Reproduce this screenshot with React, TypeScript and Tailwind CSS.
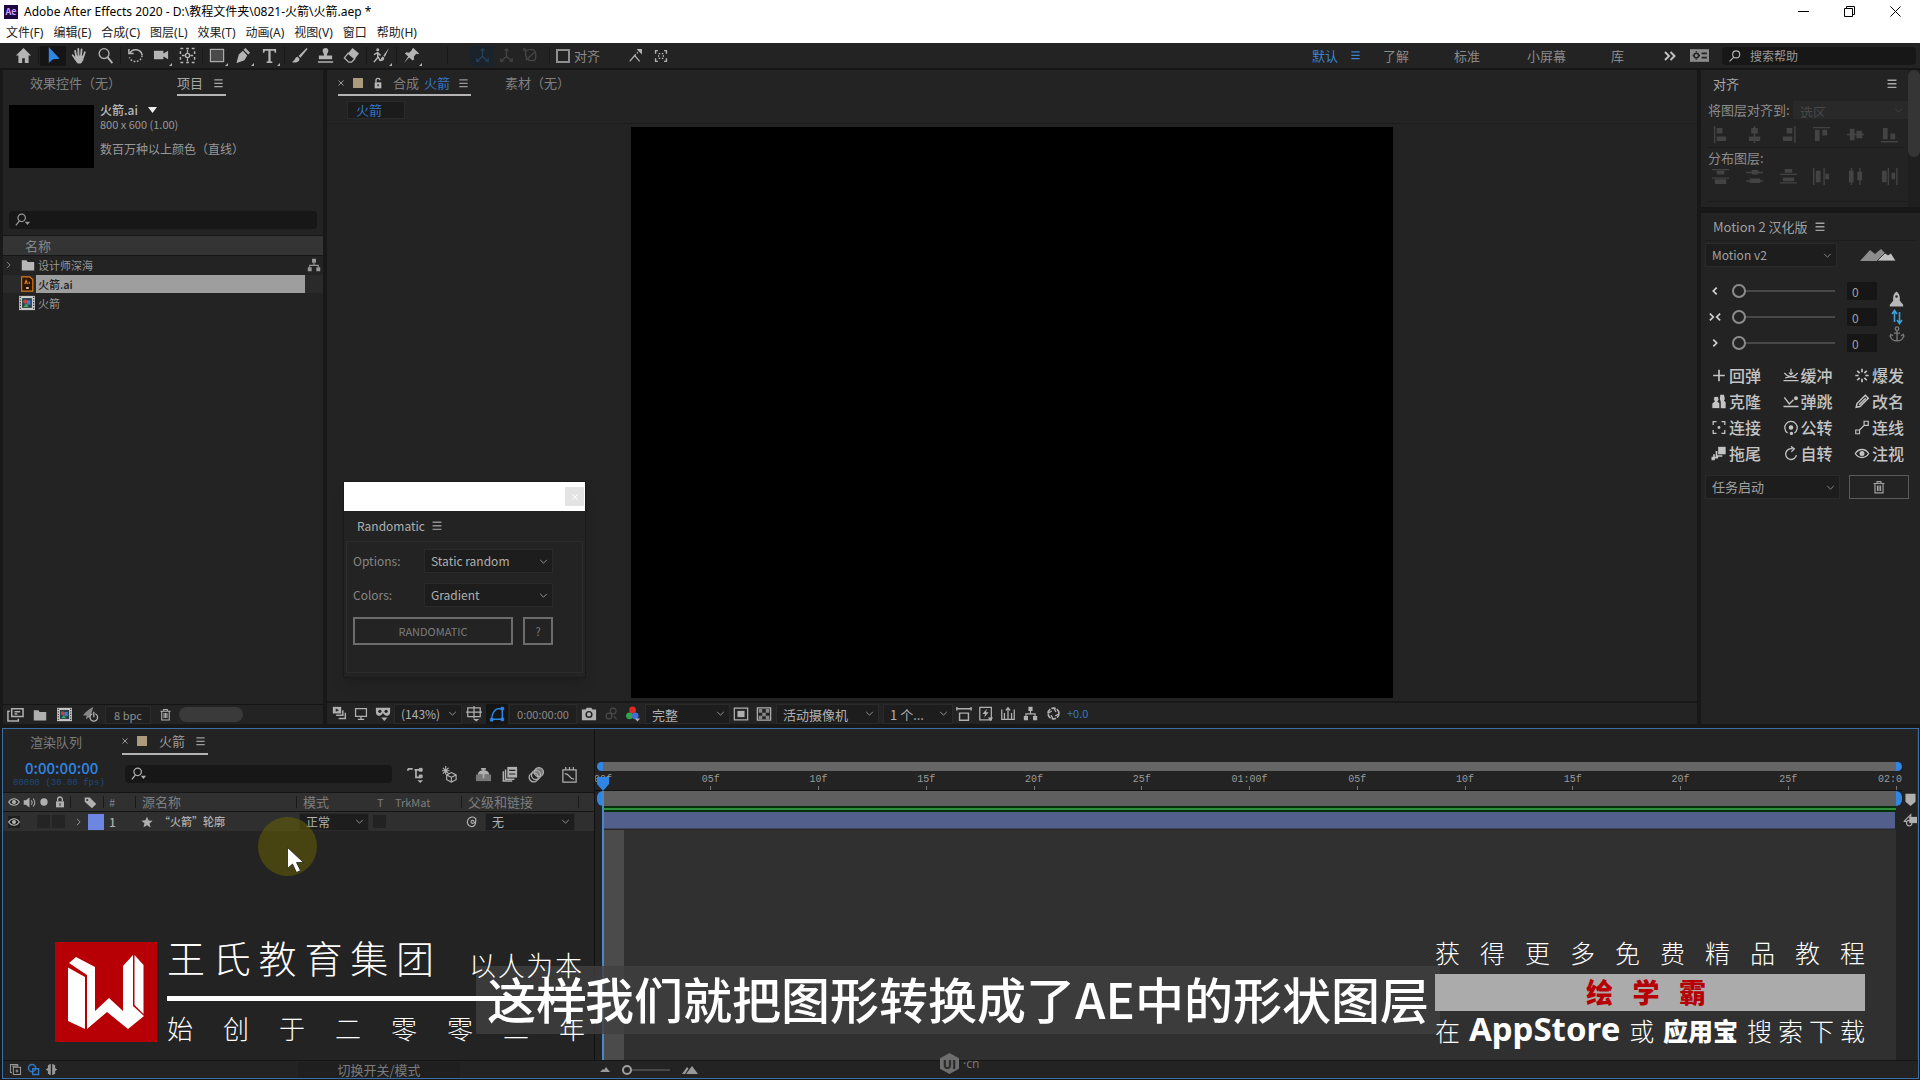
import React from "react";

type Kids = { children?: React.ReactNode };

/* ---------- icons, all on an 18 x 18 grid ---------- */
const line = { fill: "none", stroke: "currentColor", strokeWidth: 1.4 } as const;

const ICONS: Record<string, React.ReactNode> = {
  home: <path d="M9 1 1 9h2.6v8h4v-5h2.8v5h4V9H17z" />,
  select: <path d="M4 0v17l4.500-4 7-.5z" />,
  hand: (
    <g fill="none" stroke="currentColor" strokeLinecap="round">
      <path strokeWidth="1.9" d="M5.6 10 4.4 4.2M8 9 7.7 2M10.6 9l.6-6.4M13 10.500l1.6-5M4.600 12.500 1.800 8.800" />
      <path fill="currentColor" strokeWidth="1" d="M5 9.500h8.300l-.8 4.500-2 3H7l-2.800-4z" />
    </g>
  ),
  zoom: <g {...line}><circle cx="7.500" cy="7" r="5.200" /><path strokeWidth="2" d="m11.300 11 5 6" /></g>,
  rotate: <g {...line} strokeWidth="1.600"><path d="M3 6.500a7 7 0 0 1 13 2" /><path strokeDasharray="1.800 1.700" d="M16 9a7 7 0 0 1-13.500 2" /><path d="M2 2v5h5" /></g>,
  camera: <path d="M1 4h10v3l5-3v9l-5-3v3H1z" />,
  panbehind: <g {...line}><rect x="1.500" y="1.500" width="15" height="15" strokeDasharray="3 3" strokeWidth="1.600" /><circle cx="9" cy="9" r="2.200" /><path d="M9 3v3M9 12v3M3 9h3M12 9h3" /></g>,
  rect: <rect x="1.500" y="2.500" width="14" height="13" fill="#4a4a4a" stroke="currentColor" strokeWidth="1.200" />,
  pen: <g><path d="m11 1 5 5-2 2-5-5zM8.300 4l4.700 5-3 5-8 3 5-6.500a1.400 1.400 0 1 1 1 .8L4 15.500 1.500 17 4 8z" /></g>,
  type: <path d="M2 2h14v4h-1.500L14 4h-3.800v11l1.800.4V17H6v-1.600l1.800-.4V4H4l-.5 2H2z" />,
  brush: <path d="M16.500 1 8 9.500l2 2L17.500 2zM7 10.300c-3 .2-2.300 4-6 5.500 3.500 1.600 8 .6 8-3.300z" />,
  stamp: <path d="M6 4a3 3 0 0 1 6 0c0 2-1.500 3-1.500 5H16v4H2V9h5.500C7.500 7 6 6 6 4zM1 15h16v1.600H1z" />,
  eraser: <g><path d="m10 1 7 6-4.500 5.500-7-6z" /><path {...line} d="m5.500 6.500-4 5L6 16h3l3.500-3.500z" /></g>,
  roto: <g><path d="M17 1 11 9l1.500 1.500zM10.500 10c-2 .5-1.500 3-4 4.500 3 1 5.500 0 5.500-3z" /><circle cx="5" cy="3" r="1.600" /><path {...line} strokeWidth="1.600" d="M1 8l4-2 3 3M5 6v5l-4 5M5 10l3 5" /></g>,
  pin: <path d="m11 1 6 6-1.500.6-1.500-.5-2.500 3 .3 3-1.600 1.200L6.500 11 1 17l4.500-7L2 6.800l1.500-1.200 3 .4 3-2.700L9.500 2z" />,
  axis: <g {...line}><path d="M9 10V2M9 10l-6 5M9 10l6 5" /><path d="M7 4l2-2 2 2M3 12v3h3M15 12v3h-3" /></g>,
  axisview: <g {...line}><path d="M4 4c9-4 12 0 10 10M4 4l-2-2M4 4c-1 8 2 12 10 10" /><path d="M2 4V2h2M4 14 14 5" /></g>,
  snapline: <g {...line}><path d="M2 16 8 9l6 7" /><path strokeDasharray="2 1.500" d="m8 9 6-6" /><path fill="currentColor" d="M12 2h4v4z" /></g>,
  snapbox: <g {...line} strokeWidth="1.700"><path d="M2 6V2h3M13 2h3v4M16 12v4h-3M5 16H2v-4" /><path strokeDasharray="2 2" d="M6 6h6v6H6z" /></g>,
  workspace: <g><path d="M0 3h18v12H0z" /><g fill="none" stroke="#232323" strokeWidth="1.500"><circle cx="6" cy="9" r="2.200" /><path d="M6 5v1M6 12v1M2.500 9h1M8.500 9h1M11 7h5M11 11h5" /></g></g>,
  search: <g {...line} strokeWidth="1.500"><circle cx="10.500" cy="7" r="4.500" /><path d="M7.500 10.500 2 16" /></g>,
  searchdown: <g><circle cx="7.500" cy="6.500" r="4.200" {...line} /><path {...line} d="M5 10 1 15" /><path d="M11 11h6l-3 3.500z" /></g>,
  burger: <path d="M4 4h10v1.500H4zM4 8h10v1.500H4zM4 12h10v1.500H4z" />,
  lock: <g><path d="M4 8h10v9H4z" /><path {...line} strokeWidth="2" d="M6 8V5a3 3 0 0 1 6 0" /><path fill="#232323" d="M8 11h2v3H8z" /></g>,
  lockshut: <g><path d="M3 8h12v9H3z" /><path {...line} strokeWidth="2" d="M5.500 8V5a3.500 3.500 0 0 1 7 0v3" /><path fill="#232323" d="M8.200 11h1.600v3.500H8.200z" /></g>,
  folder: <path d="M1 3h6l1.500 2H17v11H1z" />,
  ai: <g><path d="M3 1h9l3.500 3v13H3z" fill="#2c1500" stroke="#d9791e" strokeWidth="1.300" /><path d="m6.500 9 1.500-4 1.500 4M11.500 6.500V9" stroke="#f08a24" fill="none" strokeWidth="1.200" /><path d="M8 12.500h3v2H8z" fill="#e8c9a8" /></g>,
  comp: <g><path fill="#c9c9c9" d="M0 1h18v16H0z" /><path stroke="#333" strokeWidth="1.400" strokeDasharray="1.500 1.500" d="M1.500 2v15M16.500 2v15" /><path fill="#26404a" d="M3.500 3.500h11v11h-11z" /><circle cx="7" cy="7.500" r="2.400" fill="#c4453c" /><path fill="#4478c4" d="M9 6h4v5H9z" /><path fill="#45a35b" d="m5 13.500 3-4 3 4z" /></g>,
  tree: <g><path d="M6.500 1h5v5h-5zM1 12h5v5H1zM12 12h5v5h-5z" /><path {...line} d="M9 6v4M3.500 12v-2.500h11V12" /></g>,
  interpret: <g {...line} strokeWidth="1.600"><path d="M5 3h12v8H5zM8 6h6M8 8.500h3" /><path d="M3 5.500H1V16h11v-2.500" /></g>,
  rocketpow: <g><path d="M12 1C7 3 3 7 1 10h4l-1 4 5-3z" opacity=".7" /><circle cx="12.500" cy="12" r="4" {...line} /><path stroke="#232323" strokeWidth="3" d="M12.500 6v5" /><path {...line} d="M12.500 6v6" /></g>,
  trash: <g {...line} strokeWidth="1.500"><path d="M2 4.500h14M6.500 4V2h5v2M3.800 5v11.500h10.400V5M7 7v7M9 7v7M11 7v7" /></g>,
  stack: <g><path d="M1 1h10v8H1z" /><path fill="#232323" d="m4.500 3 4 2-4 2z" /><path {...line} d="M13 5v6H5M16 8v7H8" strokeWidth="1.700" /></g>,
  monitor: <g {...line} strokeWidth="1.600"><path d="M2 2h14v10H2zM5 16h8M9 12v4" /></g>,
  mask: <g><path d="M1 2h16v5c0 3-2 4-4 4s-3-1.500-4-3c-1 1.500-2 3-4 3s-4-1-4-4z" /><g fill="#232323"><circle cx="5.500" cy="6" r="1.800" /><circle cx="12.500" cy="6" r="1.800" /></g><path d="M7 13h7l-3.500 4z" /></g>,
  grid: <g><path {...line} d="M2 2h14v10H2zM9 0v14M0 7h18" /><path d="M8 14.500h7l-3.500 3z" /></g>,
  shapemask: <g {...line} strokeWidth="1.600"><path d="M3 15C3 9 6 4 10 3h5v12z" /><path fill="currentColor" strokeWidth="1" d="M1.500 14h3v3h-3zM13.500 13.500h3v3h-3zM13.500 1.500h3v3h-3z" /></g>,
  photo: <g><path d="M1 4h4l1.500-2h5L13 4h4v12H1z" /><circle cx="9" cy="9.500" r="3.200" fill="none" stroke="#232323" strokeWidth="1.600" /></g>,
  link: <g {...line}><circle cx="6" cy="12" r="3.500" /><circle cx="11" cy="6" r="3.500" /><path d="m12 12 3 4" /></g>,
  rgb: <g><circle cx="8.500" cy="4.500" r="3.800" fill="#d92b22" /><circle cx="5" cy="11" r="3.800" fill="#2fa44a" /><circle cx="11.500" cy="11" r="3.800" fill="#3f6fd6" /><path d="M11 14h6l-3 3.500z" /></g>,
  target: <g><path {...line} d="M1.500 2.500h15v13h-15z" /><path d="M5 5.500h8v7H5z" /></g>,
  checker: <g><path {...line} d="M1.500 2h15v14h-15z" /><path opacity=".7" d="M3 3.500h4v4H3zM11 3.500h4v4h-4zM7 7.500h4v4H7zM3 11h4v4H3zM11 11h4v4h-4z" /></g>,
  ratio: <g {...line} strokeWidth="1.600"><path d="M4 8h10v8H4zM1 3h16M1 1v4M17 1v4" /></g>,
  fast: <g><path {...line} d="M2 1.500h13v14H2z" /><path d="m10 3-5 6h3l-1 4 5-6H9z" /><path d="M11 13h6l-3 4z" /></g>,
  tline: <g {...line}><path d="M2 4v11h14V4M5 8v7M13 8v7M9 3v12M6.500 5 9 2l2.500 3" /></g>,
  aperture: <g {...line} strokeWidth="2"><circle cx="9" cy="9" r="6.500" strokeDasharray="5.500 1.300" /><path strokeWidth="1.500" d="m9 2 3 5M16 9l-5 3M9 16l-3-5M2 9l5-3" /></g>,
  flow: <g {...line} strokeWidth="1.800"><path d="M1 3h5M1 3v2M8 4h8M9.500 4v8H14" /><path fill="currentColor" strokeWidth="1" d="M13 2.500h3v3h-3zM13 9.500h3v3h-3z" /><path fill="currentColor" stroke="none" d="M11 15h6l-3 3z" /></g>,
  draft3d: <g {...line}><path d="m11 7 5 2.500v5L11 17l-5-2.500v-5zM6 9.500l5 2.500 5-2.500M11 12v5M5 0v9M1 5h8M2 2l6 6M8 2 2 8" strokeWidth="1.200" /></g>,
  shy: <g><path d="M1 9h16v7H1z" opacity=".6" /><path {...line} strokeWidth="1.800" d="M9 2v11M6.500 3h5" /><path d="M3 9c0-6 12-6 12 0z" /></g>,
  blend: <g><path d="M6 1h11v12H6z" /><path {...line} d="M4 4v11h10M1.500 6v11h10" strokeWidth="1.700" /><path stroke="#232323" strokeWidth="1.300" d="M8 5h7M8 9h7" /></g>,
  blur: <g {...line}><circle cx="11.500" cy="6.500" r="4.800" fill="currentColor" fillOpacity=".6" /><circle cx="8.500" cy="9.500" r="4.800" /><circle cx="6" cy="12" r="4.800" /></g>,
  graph: <g {...line} strokeWidth="1.300"><path d="M2 4h14v13H2zM5 1v3M9 1v3M13 1v3M4 8c6 0 4 6 10 6" /></g>,
  eye: <g><path {...line} strokeWidth="1.700" d="M1 9c4-6.500 12-6.500 16 0-4 6.500-12 6.500-16 0z" /><circle cx="9" cy="9" r="3" /></g>,
  speaker: <g><path d="M1 6h3l5-4v14l-5-4H1z" /><path {...line} d="M11.500 6c1.500 2 1.500 4 0 6M14 3.500c3 3.500 3 7.500 0 11" /></g>,
  dot: <circle cx="9" cy="9" r="5.500" />,
  tag: <path fillRule="evenodd" d="M1 2h7l9 9-6 6-10-9zm3.500 2a1.400 1.400 0 1 0 0 2.800 1.400 1.400 0 0 0 0-2.800z" />,
  star: <path d="m9 1 2.400 5.600 6 .5-4.600 4 1.500 6L9 13.900 3.700 17l1.500-6-4.600-4 6-.5z" />,
  spiral: <path {...line} strokeWidth="1.600" d="M11 9.500a2 2 0 1 0-2 2c3 0 4.500-2 4.500-4.500M13.500 4v5c0 5-3 7.500-6.500 7C2 15 1 10 2.500 6.500 5 2 10 2 13 4.500" />,
  marker: <path d="M2 1h14v11l-7 6-7-6z" />,
  compbutton: <g><path d="M8 5h10v8H8z" /><path {...line} d="M1 11 10 2v7M1 11h4" /><circle cx="8" cy="13" r="3.500" {...line} /></g>,
  pane1: <g {...line}><path d="M6 6h10v10H6zM9 11h4M11 9v4M4 13H2V2h10v2M4 4h9" /></g>,
  pane2: <g {...line} strokeWidth="2"><circle cx="7" cy="7" r="5" /><path d="M8 8h8v8H8z" /></g>,
  pane3: <path d="M8 1v16l-4-2V11L1 9l3-2V3zM10 1v16l4-2V11l3-2-3-2V3z" />,
  plus: <path {...line} strokeWidth="2" d="M9 2v14M2 9h14" />,
  cushion: <g {...line} strokeWidth="1.500"><path d="M0 15h18M2 12c5-2 9-2 14 0M3 8c4 3 8 3 12 0M1 6c2 2 3 3 4 3M17 6c-2 2-3 3-4 3M9 1v7M6.500 5.500 9 8l2.500-2.500" /></g>,
  burst: <path {...line} strokeWidth="2" d="M9 1v4M9 13v4M1 9h4M13 9h4M3.300 3.300l2.900 2.900M11.800 11.800l2.900 2.900M3.300 14.700l2.900-2.900M11.800 6.200l2.900-2.900" />,
  people: <g><path d="M10.500 1h4.500l1 5-1 2 2 2v7h-6V9l-1-3z" /><path stroke="#232323" d="M3 3h5l1 4-1.500 2 2.500 2v6.500H.5V11L3.500 9 2.500 7z" /></g>,
  bounce: <g {...line} strokeWidth="1.700"><path d="M0 15h18M1 4l6 8 5-5" /><circle cx="15" cy="5" r="1.500" fill="currentColor" /></g>,
  pencil: <g {...line} strokeWidth="1.800"><path d="m2 16 1-4.500L13 1.500 16.500 5 6.500 15zM5.500 13l8-8" /></g>,
  connect: <g {...line} strokeWidth="1.500"><path d="M2 6V2h4M12 2h4v4M16 12v4h-4M6 16H2v-4" /><circle cx="9" cy="9" r="1" fill="currentColor" /></g>,
  orbit: <g {...line} strokeWidth="1.500"><path d="M5 15.500A7.500 7.500 0 1 1 13 15.500" /><circle cx="9" cy="9" r="2" fill="currentColor" /><circle cx="9.500" cy="16" r="1.300" fill="currentColor" /></g>,
  wire: <g {...line}><path d="M1.500 12h4.500v4.500H1.500zM11.500 1.500H16.500V6.500H11.500zM6 12l5.500-5.500" /></g>,
  trail: <g><path d="M8 1h9v9H8z" /><path {...line} strokeWidth="2" d="M6 6v6h7M3 10v4h5M1 13v3h3" /></g>,
  spin: <g {...line} strokeWidth="1.600"><path d="M11 3.500A6.500 6.500 0 1 0 15.500 11" /><path d="M9 .5l4 3-3.500 3.500" /></g>,
  rocket: <path d="M9 0c3 2 4 5 4 8v3l4 5v2H1v-2l4-5V8c0-3 1-6 4-8zm0 4.500A1.500 1.500 0 1 0 9 7.500 1.500 1.500 0 0 0 9 4.500z" fillRule="evenodd" />,
  updown: <path {...line} strokeWidth="1.600" d="M6.500 14V3M4 6l2.500-3.500L9 6M11.500 4v11M9 12l2.500 3.500 2.500-3.500" />,
  anchor: <g {...line} strokeWidth="1.500"><circle cx="9" cy="3" r="2" /><path d="M9 5v12M5.500 8h7M1.500 10c0 9 15 9 15 0M1 12l1-2.500L4.500 11M17 12l-1-2.500L13.500 11" /></g>,
};

const Icon = ({ n, className = "size-[18px]" }: { n: string; className?: string }) => (
  <svg viewBox="0 0 18 18" fill="currentColor" aria-hidden="true" className={`shrink-0 ${className}`}>
    {ICONS[n]}
  </svg>
);

const Cross = () => (
  <svg viewBox="0 0 6 6" className="size-1.5" fill="none" stroke="currentColor" aria-hidden="true"><path d="m.5.500 5 5m0-5-5 5" /></svg>
);

const Tool = ({ n, label, w = "w-[26px]", size = "size-[17px]", corner = false, className = "" }: { n: string; label: string; w?: string; size?: string; corner?: boolean; className?: string }) => (
  <button type="button" aria-label={label} className={`relative flex h-5 shrink-0 items-center justify-center ${w} ${className}`}>
    <Icon n={n} className={size} />
    {corner && (
      <svg viewBox="0 0 4 4" className="absolute right-0.5 bottom-0 size-[3px]" fill="currentColor"><path d="M4 0v4H0z" /></svg>
    )}
  </button>
);

const Sep = ({ className = "w-1" }: { className?: string }) => (
  <span className={`flex h-full shrink-0 justify-center py-1 ${className}`}><span className="w-px bg-[#181818]" /></span>
);

const Chevron = () => (
  <svg viewBox="0 0 10 6" className="pointer-events-none absolute right-1 h-[5px] w-[9px]" fill="none" stroke="currentColor" strokeWidth="1.200" opacity=".8"><path d="m1 1 4 4 4-4" /></svg>
);

const Select = ({ label, value, className = "" }: { label: string; value: string; className?: string }) => (
  <span className={`relative flex shrink-0 items-center border border-[#2a2a2a] bg-[#1d1d1d] ${className}`}>
    <select aria-label={label} defaultValue={value} className="h-full w-full appearance-none overflow-hidden bg-transparent pr-4 pl-1.5 outline-none">
      <option>{value}</option>
    </select>
    <Chevron />
  </span>
);

/* a run of Han characters spread evenly over the line */
const Spread = ({ children, className = "" }: Kids & { className?: string }) => (
  <p className={`whitespace-nowrap [text-align-last:justify] ${className}`}>{children}</p>
);

/* ---------- top of the window ---------- */
const MENUS = ["文件(F)", "编辑(E)", "合成(C)", "图层(L)", "效果(T)", "动画(A)", "视图(V)", "窗口", "帮助(H)"];

const TitleBar = () => (
  <header className="bg-white text-black">
    <div className="flex h-[23px] items-center pl-1">
      <span className="mr-1.5 flex size-[14px] items-center justify-center bg-[#1f0740] text-[9px] font-semibold text-[#c9a0ff]">Ae</span>
      <h1 className="font-['Noto_Sans','Noto_Sans_CJK_SC',sans-serif] text-xs leading-5">Adobe After Effects 2020 - D:\教程文件夹\0821-火箭\火箭.aep *</h1>
      <div className="ml-auto flex pr-0.5">
        <button type="button" aria-label="最小化" className="flex w-[46px] justify-center"><svg viewBox="0 0 11 11" className="size-[11px]" stroke="#000"><path d="M0 5.500h11" /></svg></button>
        <button type="button" aria-label="还原" className="flex w-[46px] justify-center"><svg viewBox="0 0 11 11" className="size-[11px]" stroke="#000" fill="none"><path d="M.5 2.500h8v8h-8zM2.500 2V.5h8v8H9" /></svg></button>
        <button type="button" aria-label="关闭" className="flex w-[46px] justify-center"><svg viewBox="0 0 11 11" className="size-[11px]" stroke="#000"><path d="m.5.500 10 10m0-10-10 10" /></svg></button>
      </div>
    </div>
    <nav className="flex h-5 items-center gap-2.5 pl-1.5 font-['Noto_Sans','Noto_Sans_CJK_SC',sans-serif] text-xs text-[#222]">
      {MENUS.map((m) => <button type="button" key={m}>{m}</button>)}
    </nav>
  </header>
);

const Toolbar = () => (
  <div className="flex h-[27px] items-center border-b-2 border-[#161616] pl-2.5 text-[#b4b4b4]">
    <Tool n="home" label="主页" />
    <Sep />
    <Tool n="select" label="选取工具" className="bg-[#151515] text-[#2f86e5]" />
    <Tool n="hand" label="手形工具" />
    <Tool n="zoom" label="缩放工具" />
    <Sep />
    <Tool n="rotate" label="旋转工具" />
    <Tool n="camera" label="摄像机工具" corner />
    <Tool n="panbehind" label="锚点工具" />
    <Sep />
    <Tool n="rect" label="矩形工具" corner />
    <Tool n="pen" label="钢笔工具" corner />
    <Tool n="type" label="文字工具" corner />
    <Sep />
    <Tool n="brush" label="画笔工具" />
    <Tool n="stamp" label="仿制图章" />
    <Tool n="eraser" label="橡皮擦" />
    <Sep />
    <Tool n="roto" label="Roto 笔刷" corner />
    <Sep />
    <Tool n="pin" label="人偶位置控点" corner />
    <Sep className="w-[46px]" />
    <Tool n="axis" label="本地轴" w="w-6" className="bg-[#1c2229] text-[#23405e]" />
    <Tool n="axis" label="世界轴" w="w-6" className="text-[#444]" />
    <Tool n="axisview" label="视图轴" w="w-6" className="text-[#444]" />
    <Sep className="w-[14px]" />
    <label className="flex items-center gap-1 text-[13px] text-[#8a8a8a]">
      <input type="checkbox" className="size-[14px] appearance-none border-2 border-[#8f8f8f]" />对齐
    </label>
    <Tool n="snapline" label="对齐边缘" size="size-[15px]" className="ml-[22px]" />
    <Tool n="snapbox" label="对齐框" size="size-[14px]" />
    <nav className="ml-auto flex items-center text-[13px] text-[#8a8a8a]">
      <button type="button" className="flex items-center gap-2.5 text-[#3b82d0]">默认<Icon n="burger" className="size-[15px]" /></button>
      <button type="button" className="ml-5">了解</button>
      <button type="button" className="ml-[45px]">标准</button>
      <button type="button" className="ml-[47px]">小屏幕</button>
      <button type="button" className="ml-[45px]">库</button>
      <button type="button" aria-label="更多" className="ml-10 text-[#c0c0c0]"><svg viewBox="0 0 12 10" className="h-[10px] w-3" fill="none" stroke="currentColor" strokeWidth="2"><path d="m1 1 4 4-4 4M6.500 1l4 4-4 4" /></svg></button>
      <Tool n="workspace" label="工作区" size="size-[19px]" className="ml-2.5" />
    </nav>
    <label className="mr-1 ml-2.5 flex h-[18px] w-[194px] items-center gap-2 rounded-sm bg-[#171717] pl-1.5">
      <Icon n="search" className="size-[14px]" />
      <input aria-label="搜索帮助" placeholder="搜索帮助" className="w-full bg-transparent text-xs outline-none placeholder:text-[#9a9a9a]" />
    </label>
  </div>
);

/* ---------- project panel ---------- */
const ProjectPanel = () => (
  <section className="flex w-[320px] shrink-0 flex-col bg-[#232323] text-[#989898]">
    <div className="flex h-[27px] items-start pl-[27px] text-[13px] leading-[26px]">
      <button type="button" className="text-[#808080]">效果控件（无）</button>
      <button type="button" className="ml-[56px] flex h-[26px] items-center gap-2 border-b-2 border-[#b4b4b4] pt-0.5 text-[#a8a8a8]">项目<Icon n="burger" className="size-[15px]" /></button>
    </div>
    <div className="flex h-[114px] gap-1.5 pt-2 pl-1.5">
      <div className="h-[63px] w-[85px] bg-black" />
      <div className="-mt-1 text-xs">
        <p className="flex items-center gap-2.5 leading-[18px] font-medium text-[#b8b8b8]">火箭.ai<svg viewBox="0 0 9 6" className="h-1.5 w-[9px]" fill="#eee"><path d="M0 0h9L4.500 6z" /></svg></p>
        <p className="text-[11px] leading-[10px]">800 x 600 (1.00)</p>
        <p className="mt-2.5 leading-5">数百万种以上颜色（直线）</p>
      </div>
    </div>
    <label className="mx-1.5 flex h-[18px] items-center rounded-sm bg-[#171717] pl-1.5">
      <Icon n="searchdown" className="size-4" />
      <input aria-label="搜索项目" className="w-full bg-transparent text-xs outline-none" />
    </label>
    <table className="mt-1.5 w-full text-[11px]">
      <thead>
        <tr className="h-5 border-y border-[#161616] bg-[#343434]">
          <th className="py-0 pl-[22px] text-left text-[13px] leading-4 font-normal text-[#858585]">名称</th>
        </tr>
      </thead>
      <tbody>
        <tr className="h-[19px]"><td className="p-0"><div className="flex items-center pr-0.5"><svg viewBox="0 0 6 10" className="mr-2.5 ml-[3px] h-2 w-[5px]" fill="none" stroke="currentColor"><path d="m1 1 4 4-4 4" /></svg><Icon n="folder" className="size-[14px] text-[#b8b8b8]" /><span className="ml-[3px] leading-4">设计师深海</span><Icon n="tree" className="ml-auto size-[14px]" /></div></td></tr>
        <tr className="h-[19px]"><td className="p-0"><div className="flex items-center bg-[#2a2a2a] pl-4"><Icon n="ai" className="size-4" /><span className="ml-px h-[18px] w-[269px] bg-[#9e9e9e] pl-0.5 leading-[18px] font-medium text-[#1c1c1c]">火箭.ai</span></div></td></tr>
        <tr className="h-[19px]"><td className="p-0"><div className="flex items-center pl-4"><Icon n="comp" className="size-4" /><span className="ml-[3px] leading-4">火箭</span></div></td></tr>
      </tbody>
    </table>
    <div className="mt-auto flex h-5 items-center border-t border-[#141414] text-[#b0b0b0]">
      <Tool n="interpret" label="解释素材" w="w-6" size="size-[17px]" />
      <Tool n="folder" label="新建文件夹" w="w-[26px]" size="size-[14px]" />
      <Tool n="comp" label="新建合成" w="w-[22px]" size="size-[15px]" />
      <Tool n="rocketpow" label="项目设置" w="w-[30px]" size="size-[17px]" />
      <button type="button" className="h-[18px] w-[46px] border border-[#2b2b2b] bg-[#1f1f1f] text-[11px] leading-4 text-[#8f8f8f]">8 bpc</button>
      <Tool n="trash" label="删除" w="w-[28px]" size="size-[13px]" />
      <div className="h-[15px] w-16 rounded-full bg-[#3a3a3a]" />
    </div>
  </section>
);

/* ---------- composition viewer ---------- */
const Randomatic = () => (
  <aside className="absolute bottom-[46px] left-4 w-[243px] border border-[#1a1a1a] bg-[#232323] pb-1 text-xs text-[#b0b0b0] shadow-lg">
    <div className="flex h-[29px] items-center justify-end bg-white pr-px">
      <button type="button" aria-label="关闭面板" className="flex size-[19px] items-center justify-center bg-[#e3e3e3] text-white"><Cross /></button>
    </div>
    <h2 className="flex h-[30px] items-center gap-1 pl-[13px]">Randomatic<Icon n="burger" className="size-4 text-[#909090]" /></h2>
    <div className="mx-0.5 flex h-[132px] flex-col gap-2.5 border border-[#2c2c2c] pt-[7px] pl-1.5">
      <div className="flex items-center"><span className="w-[71px] text-[#858585]">Options:</span><Select label="Options" value="Static random" className="h-6 w-[129px]" /></div>
      <div className="flex items-center"><span className="w-[71px] text-[#858585]">Colors:</span><Select label="Colors" value="Gradient" className="h-6 w-[129px]" /></div>
      <div className="flex gap-2.5 text-[11px] text-[#7c7c7c]">
        <button type="button" className="h-7 w-[160px] border-2 border-[#6c6c6c] leading-6">RANDOMATIC</button>
        <button type="button" className="h-7 w-[30px] border-2 border-[#6c6c6c] leading-6">?</button>
      </div>
    </div>
  </aside>
);

const Viewer = () => (
  <section className="relative flex min-w-0 flex-1 flex-col bg-[#232323] text-[#989898]">
    <div className="flex h-[27px] items-start pl-[11px] text-[13px] leading-[26px]">
      <div className="flex h-[26px] items-center border-b-2 border-[#b4b4b4] pt-0.5">
        <button type="button" aria-label="关闭合成" className="flex w-[15px]"><Cross /></button>
        <span className="size-[10px] bg-[#ab9a7b]" />
        <Icon n="lock" className="mx-[9px] size-3 text-[#b8b8b8]" />
        <span className="text-[#808080]">合成</span>
        <span className="ml-[5px] text-[#3577bf]">火箭</span>
        <Icon n="burger" className="ml-1.5 size-[15px]" />
      </div>
      <button type="button" className="ml-[34px] text-[#808080]">素材（无）</button>
    </div>
    <div className="flex h-[27px] items-start border-b border-[#1c1c1c] pt-1 pl-5">
      <button type="button" className="h-[18px] w-[58px] border border-[#2a2a2a] bg-[#1b1b1b] pl-2 text-left text-[13px] leading-4 text-[#3577bf]">火箭</button>
    </div>
    <div className="mx-auto mt-[3px] w-full max-w-[762px] flex-1 bg-black" />
    <Randomatic />
    <div className="mt-[3px] flex h-[23px] items-center border-t-2 border-[#181818] text-[13px] text-[#b0b0b0]">
      <Tool n="stack" label="始终预览" w="w-6" size="size-[15px]" />
      <Tool n="monitor" label="主查看器" w="w-5" size="size-[14px]" />
      <Tool n="mask" label="VR 眼镜" w="w-[23px]" size="size-4" />
      <Select label="放大率" value="(143%)" className="h-5 w-[68px] text-xs" />
      <Tool n="grid" label="网格" w="w-6" size="size-4" />
      <Tool n="shapemask" label="形状路径可见性" w="w-[22px]" size="size-4" className="bg-[#151515] text-[#2f86e5]" />
      <button type="button" className="ml-px h-5 w-[68px] border border-[#2a2a2a] bg-[#1f1f1f] text-[11px] leading-4 text-[#8a8a8a]">0:00:00:00</button>
      <Tool n="photo" label="快照" w="w-6" size="size-4" />
      <Tool n="link" label="显示快照" w="w-5" size="size-[15px]" className="text-[#4a4a4a]" />
      <Tool n="rgb" label="通道" w="w-6" size="size-4" />
      <Select label="分辨率" value="完整" className="h-5 w-[85px]" />
      <Tool n="target" label="目标区域" w="w-[22px]" size="size-4" />
      <Tool n="checker" label="透明网格" w="w-6" size="size-4" />
      <Select label="3D 视图" value="活动摄像机" className="h-5 w-[103px]" />
      <Select label="视图布局" value="1 个..." className="ml-1 h-5 w-[70px]" />
      <Tool n="ratio" label="像素长宽比" w="w-[22px]" size="size-4" />
      <Tool n="fast" label="快速预览" w="w-[22px]" size="size-4" />
      <Tool n="tline" label="时间轴" w="w-[22px]" size="size-4" />
      <Tool n="tree" label="流程图" w="w-[22px]" size="size-[15px]" />
      <Tool n="aperture" label="重置曝光度" w="w-6" size="size-[15px]" />
      <span className="ml-0.5 text-[11px] text-[#3577bf]">+0.0</span>
    </div>
  </section>
);

/* ---------- right column ---------- */
const ALIGN = [
  "M2 0h1.500v18H2zM5 2h6v6H5zM5 11h10v5H5z",
  "M8.300 0h1.500v18H8.300zM5.500 2h7v6h-7zM3 11h12v5H3z",
  "M15 0h1.500v18H15zM7 2h6v6H7zM3 11h10v5H3z",
  "M0 1h18v1.500H0zM2 4h5v12H2zM10 4h5v6h-5z",
  "M0 8.300h18v1.500H0zM3 3h5v12H3zM10 5h6v8h-6z",
  "M0 16h18v1.500H0zM2 2h5v12H2zM10 8h5v6h-5z",
];
const DISTRIBUTE = [
  "M0 1h18v1.500H0zM5 3h8v4H5zM0 10h18v1.500H0zM3 12h12v5H3z",
  "M0 4h18v1.500H0zM6 2h7v5H6zM0 13h18v1.500H0zM4 11h11v5H4z",
  "M5 1h8v4H5zM0 6h18v1.500H0zM3 10h12v4H3zM0 15h18v1.500H0z",
  "M0 0h1.500v18H0zM3 3h5v12H3zM11 0h1.500v18H11zM13 6h4v6h-4z",
  "M4 0h1.500v18H4zM2 3h5v12H2zM13 0h1.500v18H13zM11 4h5v9h-5z",
  "M7 0h1.500v18H7zM1 3h5v12H1zM16 0h1.500v18H16zM11 5h4v7h-4z",
];
const AlignRow = ({ shapes, label }: { shapes: string[]; label: string }) => (
  <div className="flex justify-between pr-2.5 pl-1">
    {shapes.map((d, i) => (
      <button type="button" key={d} aria-label={`${label} ${i + 1}`}><svg viewBox="0 0 18 18" className="size-[17px]" fill="#434343"><path d={d} /></svg></button>
    ))}
  </div>
);

const ACTIONS: [string, string][] = [
  ["plus", "回弹"], ["cushion", "缓冲"], ["burst", "爆发"],
  ["people", "克隆"], ["bounce", "弹跳"], ["pencil", "改名"],
  ["connect", "连接"], ["orbit", "公转"], ["wire", "连线"],
  ["trail", "拖尾"], ["spin", "自转"], ["eye", "注视"],
];
const EASES: [string, string][] = [
  ["缓入", "M9 2 5 6l4 4"],
  ["缓入缓出", "m1 2 4 4-4 4M13 2 9 6l4 4"],
  ["缓出", "m5 2 4 4-4 4"],
];

const RightColumn = () => (
  <div className="flex w-[219px] shrink-0 flex-col gap-1.5">
    <section className="flex h-[137px] bg-[#232323] text-[13px] text-[#8c8c8c]">
      <div className="min-w-0 flex-1 pl-[7px]">
        <h2 className="flex h-[28px] items-center justify-between pr-2 pl-[5px] text-[#a8a8a8]">对齐<Icon n="burger" className="size-4" /></h2>
        <div className="flex h-6 items-center"><span className="whitespace-nowrap">将图层对齐到:</span><Select label="将图层对齐到" value="选区" className="ml-auto h-[18px] w-[115px] border-transparent bg-[#292929] text-[#484848]" /></div>
        <div className="pt-1"><AlignRow shapes={ALIGN} label="对齐方式" /></div>
        <p className="mt-1 mr-1 border-t border-[#1b1b1b] leading-5">分布图层:</p>
        <AlignRow shapes={DISTRIBUTE} label="分布方式" />
        <div className="mt-4 border-t border-[#1b1b1b]" />
      </div>
      <div className="w-3 bg-[#1f1f1f]"><div className="h-[87px] rounded-full bg-[#353535]" /></div>
    </section>
    <section className="flex-1 bg-[#232323] px-1 text-[#a0a0a0]">
      <h2 className="flex h-[28px] items-center gap-1 border-b border-[#1d1d1d] pl-2 text-[13px]">Motion 2 汉化版<Icon n="burger" className="size-4" /></h2>
      <div className="mt-0.5 flex items-center justify-between pr-5">
        <Select label="脚本" value="Motion v2" className="h-6 w-[132px] text-xs" />
        <svg viewBox="0 0 36 13" className="h-[13px] w-9" aria-hidden="true"><path d="M0 12 10 1l5 4 6-5 5 5-7 7z" fill="#8c8c8c" /><path d="m17 12 8-8 3 2 3-2 5 8z" fill="#c0c0c0" stroke="#232323" strokeWidth=".8" /></svg>
      </div>
      <div className="mt-2.5 flex">
        <div>
          {EASES.map(([name, d]) => (
            <label key={name} className="flex h-[26px] items-center pt-0.5 text-xs">
              <svg viewBox="0 0 14 12" className="mr-[11px] ml-1 h-3 w-3" fill="none" stroke="#d0d0d0" strokeWidth="2"><path d={d} /></svg>
              <input type="range" aria-label={name} defaultValue={0} className="h-4 w-[103px] appearance-none bg-transparent [&::-webkit-slider-runnable-track]:h-0.5 [&::-webkit-slider-runnable-track]:bg-[#474747] [&::-webkit-slider-thumb]:-mt-1.5 [&::-webkit-slider-thumb]:size-3.5 [&::-webkit-slider-thumb]:appearance-none [&::-webkit-slider-thumb]:rounded-full [&::-webkit-slider-thumb]:border-2 [&::-webkit-slider-thumb]:border-[#8c8c8c] [&::-webkit-slider-thumb]:bg-[#232323]" />
              <input aria-label={`${name}数值`} defaultValue="0" className="ml-3 h-[18px] w-[30px] bg-[#161616] pl-[5px] outline-none" />
            </label>
          ))}
        </div>
        <div className="flex flex-1 flex-col items-center justify-center">
          <Icon n="rocket" className="h-[18px] w-[15px] text-[#b8b8b8]" />
          <Icon n="updown" className="size-[18px] text-[#3d9fd8]" />
          <Icon n="anchor" className="size-[16px] text-[#7c7c7c]" />
        </div>
      </div>
      <div className="mt-[7px] flex flex-wrap justify-between pl-1.5">
        {ACTIONS.map(([n, name]) => (
          <button type="button" key={name} className="flex h-[26px] w-[62px] items-center gap-0.5 text-base leading-[26px] font-medium whitespace-nowrap text-[#c4c4c4]"><Icon n={n} className="h-[15px] w-4" />{name}</button>
        ))}
      </div>
      <div className="mt-[9px] flex gap-[9px] text-[13px]">
        <Select label="任务" value="任务启动" className="h-6 w-[135px]" />
        <button type="button" aria-label="删除任务" className="flex h-6 w-[60px] items-center justify-center border border-[#5a5a5a]"><Icon n="trash" className="size-3.5" /></button>
      </div>
    </section>
  </div>
);

/* ---------- timeline ---------- */
const LABELS = ["00f", "05f", "10f", "15f", "20f", "25f", "01:00f", "05f", "10f", "15f", "20f", "25f", "02:00f"];

const Divider = () => <span className="h-3 w-px shrink-0 bg-[#191919]" />;

const LayerPane = () => (
  <div className="flex w-[592px] shrink-0 flex-col border-r border-[#111]">
    <div className="flex h-[27px] items-start pl-[27px] text-[13px] leading-[26px]">
      <button type="button" className="text-[#7c7c7c]">渲染队列</button>
      <div className="ml-10 flex h-[26px] items-center border-b-2 border-[#b4b4b4] text-[#9c9c9c]">
        <button type="button" aria-label="关闭时间轴" className="flex w-[15px]"><Cross /></button>
        <span className="mr-3 size-[10px] bg-[#ab9a7b]" />火箭
        <Icon n="burger" className="ml-2 size-[15px]" />
      </div>
    </div>
    <div className="flex h-9 items-center text-[#b0b0b0]">
      <div className="w-[122px] pl-2.5">
        <p className="pl-3 text-[15px] leading-[18px] font-medium text-[#2f86e5]">0:00:00:00</p>
        <p className="font-['Liberation_Mono',monospace] text-[9px] leading-3 text-[#1d4a7a]">00000 (30.00 fps)</p>
      </div>
      <label className="flex h-[18px] w-[267px] items-center rounded-sm bg-[#171717] pl-1.5">
        <Icon n="searchdown" className="size-4" />
        <input aria-label="搜索图层" className="w-full bg-transparent text-xs outline-none" />
      </label>
      <Tool n="flow" label="合成微型流程图" w="w-9" className="ml-[5px]" />
      <Tool n="draft3d" label="草图 3D" w="w-8" />
      <Tool n="shy" label="隐藏图层" w="w-9" />
      <Tool n="blend" label="帧混合" w="w-[18px]" size="size-4" className="mr-[5px]" />
      <Tool n="blur" label="运动模糊" w="w-[24px]" />
      <Tool n="graph" label="图表编辑器" w="w-[42px]" />
    </div>
    <div className="flex h-5 items-center border-y border-[#141414] bg-[#303030] pl-[5px] text-[13px] leading-[18px] text-[#7e7e7e]">
      <Icon n="eye" className="size-3 text-[#b0b0b0]" />
      <Icon n="speaker" className="ml-[3px] size-[13px] text-[#b0b0b0]" />
      <Icon n="dot" className="ml-0.5 size-3 text-[#b0b0b0]" />
      <Icon n="lockshut" className="mr-1 ml-1 size-3 text-[#b0b0b0]" />
      <Divider />
      <Icon n="tag" className="mr-1.5 ml-[13px] size-[13px] text-[#b0b0b0]" />
      <Divider />
      <span className="w-[31px] pl-[5px] text-[11px]">#</span>
      <Divider />
      <span className="w-[160px] pl-1.5">源名称</span>
      <Divider />
      <span className="w-20 pl-1.5">模式</span>
      <span className="w-[18px] text-[11px]">T</span>
      <span className="w-[66px] text-[11px]">TrkMat</span>
      <Divider />
      <span className="w-[116px] pl-1.5">父级和链接</span>
      <Divider />
    </div>
    <div className="flex h-[19px] items-center bg-[#2f2f2f] pl-[5px] text-xs text-[#b0b0b0]">
      <span className="bg-[#1f1f1f]"><Icon n="eye" className="size-3" /></span>
      <span className="mr-0.5 ml-[17px] size-[13px] bg-[#242424]" />
      <span className="size-[13px] bg-[#242424]" />
      <svg viewBox="0 0 6 10" className="mr-[7px] ml-[11px] h-2 w-[5px]" fill="none" stroke="currentColor"><path d="m1 1 4 4-4 4" /></svg>
      <span className="size-4 bg-[#6c86e2]" />
      <span className="w-9 pl-[5px] font-medium">1</span>
      <span className="flex w-[159px] items-center font-medium"><Icon n="star" className="mr-1.5 ml-px size-3" /><span className="text-[11px]">“火箭”轮廓</span></span>
      <Select label="模式" value="正常" className="h-[18px] w-[70px]" />
      <span className="ml-1 size-[13px] bg-[#222]" />
      <Icon n="spiral" className="mr-1.5 ml-[80px] size-[13px]" />
      <Select label="父级和链接" value="无" className="h-[18px] w-[90px]" />
    </div>
  </div>
);

const Track = () => (
  <div className="relative flex min-w-0 flex-1 flex-col pt-[33px] pl-2">
    <div className="-ml-1.5 flex h-[9px]">
      <span className="w-1.5 rounded-l-full bg-[#2f86e5]" /><span className="flex-1 bg-[#666]" /><span className="w-1.5 rounded-r-full bg-[#2f86e5]" />
    </div>
    <div className="-ml-2 flex h-5 items-end justify-between overflow-hidden border-b border-[#111] pr-1.5 pl-2 font-['Liberation_Mono',monospace] text-[10px] text-[#9a9a9a]">
      {LABELS.map((t, i) => (
        <span key={i} className="flex w-0 flex-col items-center leading-[13px] whitespace-nowrap">{t}<span className="flex h-1 shrink-0"><span className="w-px bg-[#777]" /></span></span>
      ))}
    </div>
    <div className="-ml-1.5 flex h-[15px]">
      <span className="w-1.5 rounded-l-full bg-[#2f86e5]" /><span className="flex-1 bg-[#5f5f5f]" /><span className="w-1.5 rounded-r-full bg-[#2f86e5]" />
    </div>
    <div className="mr-1.5 h-1.5 border-y-2 border-[#06300c] bg-[#2f8f3a]" />
    <div className="mr-[7px] h-[17px] border-b border-[#3d4560] bg-[#525f8d]" />
    <div className="mr-1.5 flex-1 border-t border-[#282828] bg-[#303030]"><div className="h-full w-[21px] bg-[#4b4b4b]" /></div>
    <div className="absolute top-[48px] bottom-0 left-0 flex w-4 flex-col items-center text-[#2f86e5]">
      <svg viewBox="0 0 12 14" className="h-3.5 w-3 shrink-0" fill="currentColor"><path d="M0 0h12v7l-6 7-6-7z" /></svg>
      <span className="w-0.5 flex-1 bg-[#4a87c8]" />
    </div>
  </div>
);

const Timeline = () => (
  <section className="mt-1 mr-px mb-px ml-0.5 flex h-[351px] flex-col border border-[#3d6fa6] bg-[#232323]">
    <div className="flex min-h-0 flex-1">
      <LayerPane />
      <Track />
      <div className="flex w-4 shrink-0 flex-col items-end gap-1.5 border-r border-[#16324f] pt-[63px] text-[#b0b0b0]">
        <Icon n="marker" className="h-[15px] w-[13px]" />
        <Icon n="compbutton" className="size-[14px]" />
      </div>
    </div>
    <div className="flex h-[18px] items-center border-t border-[#151515] pl-[3px] text-[#999]">
      <Tool n="pane1" label="图层开关" w="w-[18px]" size="size-[13px]" />
      <Tool n="pane2" label="转换控制" w="w-[18px]" size="size-[13px]" className="text-[#2f78c8]" />
      <Tool n="pane3" label="入点出点" w="w-[18px]" size="size-[13px]" />
      <button type="button" className="ml-[238px] h-4 w-[162px] bg-[#1f1f1f] text-[13px] leading-4 text-[#7c7c7c]">切换开关/模式</button>
      <svg viewBox="0 0 10 5" className="ml-[140px] h-[5px] w-2.5" fill="currentColor"><path d="m0 5 3-3 1 1 2-3 4 5z" /></svg>
      <input type="range" aria-label="时间缩放" defaultValue={0} className="ml-3 h-3 w-[48px] appearance-none bg-transparent [&::-webkit-slider-runnable-track]:h-0.5 [&::-webkit-slider-runnable-track]:bg-[#474747] [&::-webkit-slider-thumb]:-mt-1 [&::-webkit-slider-thumb]:size-2.5 [&::-webkit-slider-thumb]:appearance-none [&::-webkit-slider-thumb]:rounded-full [&::-webkit-slider-thumb]:border-2 [&::-webkit-slider-thumb]:border-[#a0a0a0] [&::-webkit-slider-thumb]:bg-[#232323]" />
      <svg viewBox="0 0 16 8" className="ml-3 h-2 w-4" fill="currentColor"><path d="M0 8 5 1l1.500 1.500L3 8zM4 8l6-8 6 8z" /></svg>
    </div>
  </section>
);

/* ---------- video overlays ---------- */
const Brand = () => (
  <div className="absolute bottom-[35px] left-[55px] flex gap-2.5 text-white">
    <svg viewBox="0 0 102 100" className="mt-[5px] h-[100px] w-[102px]" role="img" aria-label="王氏教育集团">
      <path fill="#b70005" d="M0 0h102v100H0z" />
      <g fill="#fff">
        <path d="M14 21 21 15 40 25v44l14-13 14 13V24l10-11v51l11 10-16 13-21-17-20 17V33z" />
        <path d="M13 25.500 30 35v52l-17-8z" />
        <path d="m79.500 13 9 10v49l-9-9z" />
      </g>
    </svg>
    <div className="w-[418px]">
      <div className="flex h-[44px] justify-between">
        <Spread className="w-[267px] text-[38px] leading-10 font-light">王氏教育集团</Spread>
        <Spread className="mr-[3px] w-[113px] self-end text-[27px] leading-8 font-light">以人为本</Spread>
      </div>
      <div className="mt-[15px] h-[5px] bg-white" />
      <Spread className="mt-2.5 text-[26px] leading-[34px] font-light">始创于二零零二年</Spread>
    </div>
  </div>
);

const Promo = () => (
  <div className="absolute right-[55px] bottom-[35px] w-[430px] text-[25px] leading-[34px] font-light text-white">
    <Spread>获得更多免费精品教程</Spread>
    <Spread className="mt-[5px] h-[37px] bg-[#ababab] pr-[159px] pl-[151px] text-[27px] leading-9 font-black text-[#b70005]">绘学霸</Spread>
    <p className="mt-[3px] flex items-baseline justify-between leading-[30px] whitespace-nowrap">
      <span>在</span><b className="font-['Noto_Sans'] text-[33px] font-bold">AppStore</b><span>或</span><b className="font-black">应用宝</b><Spread className="w-[118px]">搜索下载</Spread>
    </p>
  </div>
);

export default function App() {
  return (
    <div className="relative flex min-h-screen flex-col overflow-hidden bg-[#181818] font-['Noto_Sans_CJK_SC',sans-serif]">
      <TitleBar />
      <div className="bg-[#232323]"><Toolbar /></div>
      <main className="ml-[3px] flex flex-1 gap-1">
        <ProjectPanel />
        <Viewer />
        <RightColumn />
      </main>
      <Timeline />

      <div className="absolute bottom-[204px] left-[258px] size-[59px] rounded-full bg-[#6b6600]/50" />
      <svg viewBox="0 0 17 26" className="absolute bottom-[207px] left-[287px] h-[26px] w-[17px]" fill="#fff" stroke="#222" strokeWidth=".8"><path d="M.5.500v21l5-4.500 4 8.500 4-2-4-8h7z" /></svg>

      <p className="absolute bottom-[46px] left-1/2 -ml-[484px] h-[68px] w-[964px] bg-[#404040]/80 text-center text-[49px] leading-[64px] font-medium whitespace-nowrap text-white">
        这样我们就把图形转换成了AE中的形状图层
      </p>
      <Brand />
      <Promo />
      <div className="absolute bottom-1.5 left-[940px] flex items-center gap-1 text-[#777]">
        <span className="flex h-[21px] w-[19px] items-center justify-center bg-[#6e6e6e] text-xs font-black text-[#2a2a2a] [clip-path:polygon(50%_0,100%_25%,100%_75%,50%_100%,0_75%,0_25%)]">UI</span>
        <span className="font-['Noto_Sans'] text-xs leading-4">·cn</span>
      </div>
    </div>
  );
}
